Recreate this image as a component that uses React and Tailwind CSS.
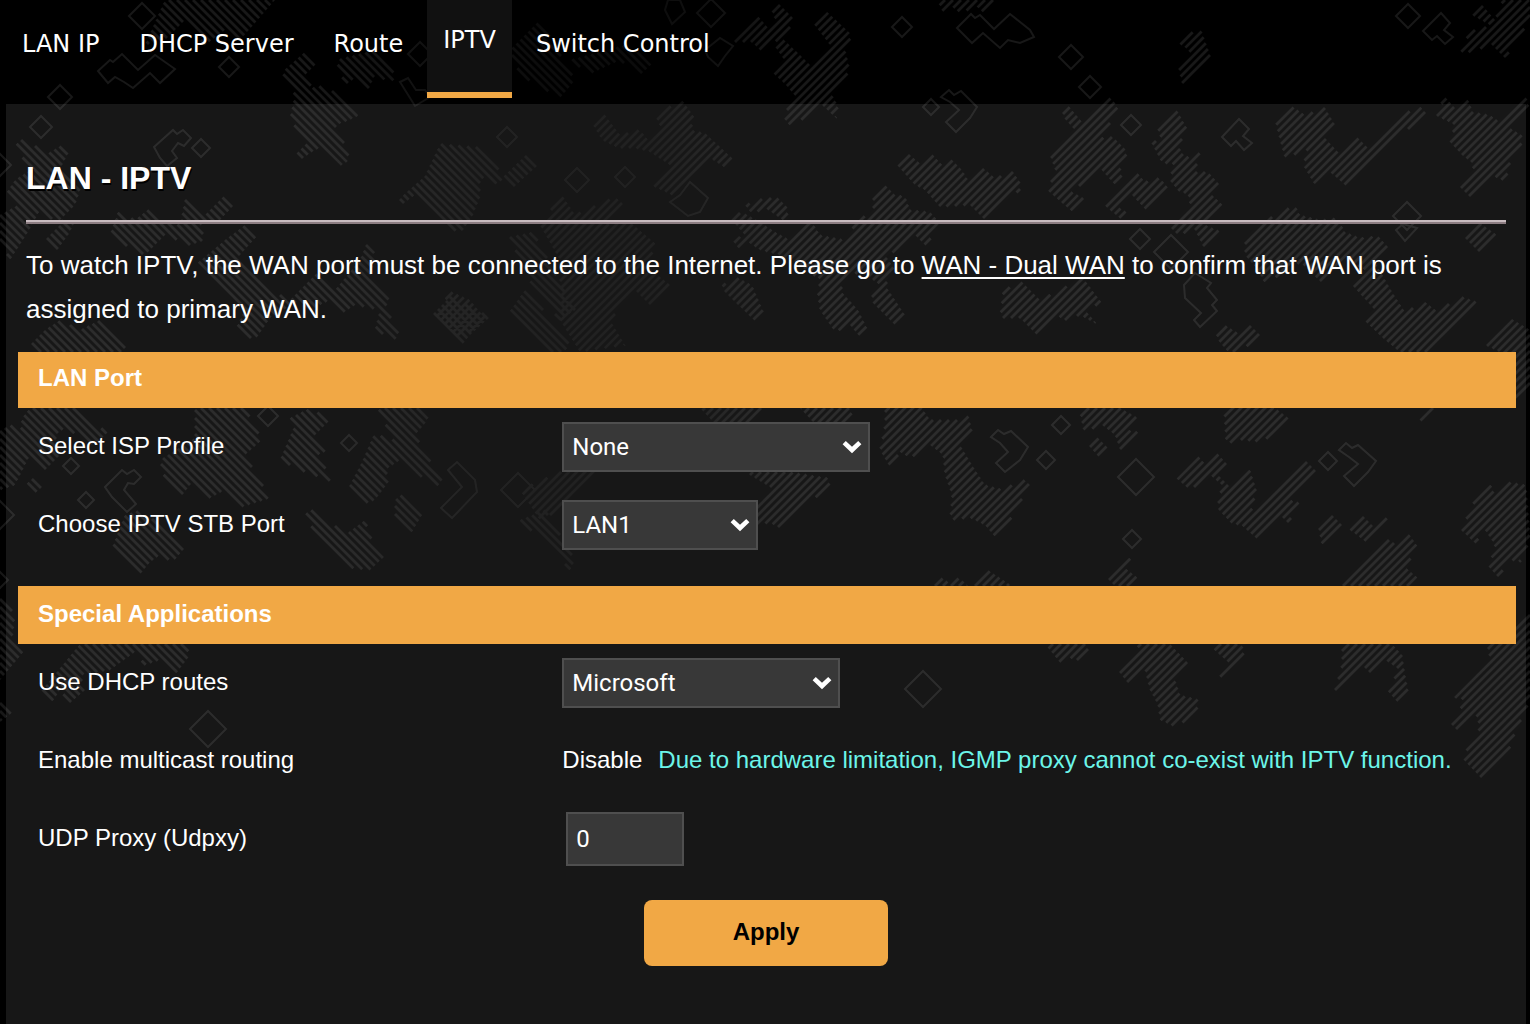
import React, { useState } from 'react';

const tabs = ['LAN IP', 'DHCP Server', 'Route', 'IPTV', 'Switch Control'];

// Hatched patches, stripes rising to the right
const risingPatches = [
  '733,42 758,16 768,28 776,22 771,8 777,2 795,20 785,34 762,52 752,42',
  '813,23 825,10 852,35 845,50 850,70 832,95 838,106 836,118 822,105 791,127 782,116 797,98 786,85 772,72 783,58 774,45 782,38 800,55 813,68 830,45',
  '937,0 998,0 985,14 975,5 961,14 950,5 943,12',
  '655,115 682,100 695,118 690,130 705,133 732,158 724,167 710,158 676,197 653,186 670,165 650,152 635,148 618,148 602,140 593,125 605,115 620,135 640,130 650,142 662,130',
  '897,165 910,155 922,165 933,155 945,168 950,158 962,170 968,180 983,168 995,178 1013,172 1020,182 1020,190 1006,200 985,220 970,205 940,207 925,190 915,185',
  '873,195 884,184 895,195 905,196 910,210 930,212 942,225 925,245 915,235 900,250 885,255 895,270 885,285 905,315 897,327 870,300 880,285 862,272 850,275 840,290 858,310 868,330 860,337 850,325 835,332 820,310 817,290 822,280 812,275 795,262 780,255 760,250 745,240 740,250 732,240 745,235 730,218 742,212 760,222 775,232 790,240 800,225 812,222 820,235 845,240 860,217 873,215',
  '745,205 765,198 778,198 790,210 783,220 765,208 752,214',
  '722,285 738,278 752,285 757,297 765,315 757,323 735,302 725,292',
  '540,225 562,195 575,215 615,197 622,203 600,225 630,222 657,245 645,265 670,285 650,305 635,290 610,320 625,345 580,352 560,320 560,260',
  '433,314 452,292 470,300 485,318 460,340',
  '520,490 560,472 600,470 560,510 540,520',
  '1062,110 1067,104 1082,122 1108,96 1118,106 1112,120 1100,138 1113,137 1128,152 1120,165 1122,178 1116,186 1100,168 1072,192 1087,200 1075,214 1047,190 1056,172 1050,155 1075,130 1064,118',
  '1104,205 1135,170 1145,182 1160,178 1170,190 1148,212 1132,195 1118,207 1128,213 1122,220',
  '1157,127 1175,107 1188,130 1178,145 1185,158 1200,152 1195,172 1208,172 1220,185 1212,195 1225,207 1205,225 1222,232 1205,250 1195,230 1178,235 1168,225 1190,205 1188,193 1180,193 1168,178 1178,165 1162,163 1150,140 1162,142',
  '1275,120 1290,105 1305,115 1325,108 1335,125 1325,138 1338,152 1358,138 1368,148 1418,104 1426,113 1345,185 1330,172 1315,185 1303,165 1308,150 1285,158 1280,140',
  '1435,115 1445,97 1455,108 1468,100 1473,112 1490,115 1500,122 1526,97 1530,110 1510,128 1526,138 1508,160 1513,167 1502,180 1490,175 1470,197 1460,187 1475,165 1462,155 1450,142 1455,125',
  '1245,238 1270,218 1295,205 1300,215 1320,220 1338,218 1345,232 1360,238 1378,236 1388,247 1375,262 1392,292 1405,312 1425,302 1438,312 1460,296 1480,303 1450,330 1430,352 1400,352 1385,340 1366,322 1375,310 1352,285 1365,270 1345,260 1322,283 1300,262 1265,284 1258,270 1245,255',
  '1465,238 1480,223 1497,235 1480,253',
  '1178,43 1200,27 1210,55 1183,87 1178,65 1195,45 1186,48',
  '1472,15 1483,6 1495,20 1503,0 1530,0 1530,20 1505,58 1492,45 1460,55 1470,30 1480,30 1490,25',
  '1003,292 1020,280 1040,300 1083,278 1102,303 1085,310 1098,325 1080,315 1065,320 1055,315 1037,335 1020,318 1000,318',
  '1215,330 1225,325 1238,333 1248,323 1260,335 1240,352 1228,352 1218,340',
  '1485,345 1510,318 1530,330 1530,385 1516,405 1500,352',
  '880,450 885,425 885,408 920,405 930,420 960,420 968,415 972,430 960,445 972,465 985,485 1005,490 1022,478 1030,485 1010,520 995,537 985,525 970,518 950,520 952,495 945,475 943,455 930,445 910,458 900,452 890,467',
  '700,408 765,408 752,424 715,424',
  '800,408 855,408 845,424 815,424',
  '755,505 775,490 745,472 790,472 828,478 830,485 780,528 768,522 755,530',
  '1080,413 1085,408 1120,408 1138,418 1127,430 1138,432 1120,449 1115,435 1102,425 1084,432',
  '1090,447 1098,438 1108,448 1098,456',
  '1224,410 1240,400 1275,408 1291,420 1262,442 1240,440 1226,444',
  '1418,418 1430,408 1440,408 1424,424',
  '1176,478 1198,456 1206,465 1217,453 1226,463 1218,475 1230,487 1250,470 1257,492 1250,510 1265,502 1306,461 1315,470 1290,500 1300,503 1288,523 1280,515 1256,538 1240,524 1233,525 1217,508 1222,485 1210,475 1190,490',
  '1319,530 1332,515 1342,525 1322,545',
  '1350,530 1364,517 1372,525 1384,514 1388,520 1366,542',
  '1335,586 1384,537 1394,543 1407,531 1418,547 1405,567 1418,578 1412,586',
  '1461,530 1475,500 1490,483 1495,495 1508,482 1526,485 1530,540 1520,562 1510,560 1498,577 1489,567 1495,545 1485,530 1475,543',
  '1106,577 1128,555 1132,562 1125,568 1138,578 1132,586 1115,586',
  '935,586 942,578 948,582 960,578 968,586',
  '970,586 988,570 1012,586',
  '1045,644 1088,644 1088,655 1078,663 1075,655 1062,665',
  '1120,673 1140,644 1170,644 1188,663 1175,680 1180,695 1200,700 1195,715 1175,727 1160,720 1158,705 1150,690 1145,670 1128,683',
  '1212,648 1215,644 1242,644 1244,655 1218,681 1228,662',
  '1335,690 1342,665 1342,644 1392,644 1402,655 1405,675 1408,690 1400,705 1387,690 1400,670 1385,660 1372,675 1362,665 1340,690',
  '1451,697 1490,660 1487,644 1500,640 1530,615 1530,700 1512,740 1508,755 1483,780 1462,758 1480,728 1475,712 1457,730 1452,725 1465,700',
];

// Hatched patches, stripes falling to the right
const fallingPatches = [
  '145,45 165,0 275,0 240,40 225,30 205,45 185,20 165,40',
  '510,50 540,20 575,80 560,98 520,75',
  '570,60 625,45 654,62 640,75 620,60 590,74',
  '282,72 305,52 318,62 305,75 312,88 325,85 360,115 345,122 335,125 345,145 350,160 340,166 300,135 290,118 295,95',
  '336,60 375,50 398,78 390,82 375,75 368,90 355,78 345,85',
  '295,155 308,142 315,150 300,160',
  '15,145 25,137 45,155 62,145 70,150 62,165 80,190 75,205 60,220 75,222 68,235 55,253 45,240 60,225 40,210 28,232 10,260 0,240 0,215 18,205 5,195 15,180 30,170',
  '110,235 118,212 135,220 150,208 165,222 180,225 185,200 205,215 225,195 234,205 220,220 200,225 205,240 190,245 165,235 145,255 125,245',
  '195,265 225,240 245,225 258,235 240,255 250,270 270,290 290,300 310,280 320,270 335,290 360,260 368,240 375,255 370,280 390,295 385,310 400,330 395,340 375,330 380,310 355,305 340,315 330,300 310,310 300,300 270,318 255,340 235,330 245,310 230,295 215,285',
  '440,144 477,147 497,164 503,186 480,177 480,197 472,217 460,234 430,211 415,195 400,206 400,198 425,176',
  '503,177 527,154 537,166 515,186',
  '510,237 533,232 575,310 560,320 535,290 520,262',
  '510,311 525,290 570,340 565,352 550,352',
  '433,314 450,297 490,317 470,335 462,345',
  '30,345 45,330 60,320 80,330 100,320 125,345 125,352 35,352',
  '22,418 30,408 75,408 90,422 108,432 95,445 65,428 55,435 60,455 45,470 30,455 15,485 0,490 0,430 12,425 20,435',
  '25,485 33,478 42,487 33,495',
  '160,460 195,438 195,408 245,408 262,440 245,455 270,498 242,507 225,490 210,498 190,485 180,498 165,480',
  '112,548 125,515 140,510 160,525 183,550 173,562 160,555 150,562 138,577',
  '280,460 295,425 290,418 310,408 330,420 315,435 328,450 318,455 333,482 300,470',
  '350,485 362,462 375,432 395,445 378,408 425,408 428,420 415,435 443,483 435,487 400,460 385,470 390,480 375,500 362,505',
  '395,500 405,492 422,515 412,532 395,522',
  '303,515 315,508 345,535 365,520 372,540 384,557 370,570 350,568 325,545',
  '520,520 545,510 575,560 570,570 555,552',
  '0,595 15,615 12,640 25,650 0,680',
  '42,690 75,650 80,644 185,644 190,655 175,675 160,660 145,665 135,652 110,670 80,675 85,690 70,703 60,690 52,702',
  '0,700 13,712 0,722',
];

const outlines = [
  '98,71 110,60 113,62 122,54 138,70 155,55 175,69 160,83 150,73 133,88 124,82 115,77 108,83',
  '154,147 173,130 177,134 183,130 191,138 184,146 178,143 172,151 177,158 167,166 160,158',
  '941,97 949,90 954,95 961,91 977,107 970,118 956,132 946,122 959,110 950,102',
  '957,28 971,14 975,18 980,15 994,29 1010,14 1030,30 1034,37 1020,43 1008,40 1000,48 983,33 972,43',
  '1423,31 1441,13 1450,23 1444,30 1453,37 1445,44 1437,36 1432,40',
  '1222,137 1239,119 1249,129 1243,136 1252,143 1244,150 1236,141 1231,146',
  '991,437 998,430 1004,434 1011,431 1028,447 1020,460 1005,472 996,463 1008,452 1000,443',
  '1339,450 1346,443 1352,448 1358,445 1376,461 1368,472 1354,486 1344,476 1358,464 1349,457',
  '105,487 122,470 127,474 134,470 141,477 134,484 128,483 124,490 136,504 127,512 112,497',
  '1184,285 1195,273 1211,283 1207,288 1217,300 1212,305 1217,311 1200,327 1194,320 1201,313 1185,298',
  '1396,230 1403,224 1417,228 1405,241',
  '448,470 457,462 475,480 477,492 452,518 441,508 462,487',
  '665,10 672,24 685,12 680,0 668,0',
  '705,50 720,38 733,46 725,56 718,66 708,57',
  '400,82 408,78 416,90 425,90 430,97 415,106',
  '670,202 680,195 690,182 708,198 700,212 688,216',
];

// [centre x, centre y, half width]
const diamonds = [
  [142, 16, 13], [60, 97, 12], [41, 127, 11], [229, 67, 10], [201, 148, 9], [420, 54, 12],
  [0, 165, 11], [71, 466, 8], [86, 500, 8], [268, 416, 10], [349, 443, 8], [711, 13, 14],
  [577, 180, 12], [625, 177, 10], [902, 27, 10], [1071, 57, 12], [1090, 87, 11], [507, 137, 10],
  [1131, 125, 10], [1408, 16, 12], [931, 107, 8], [1140, 239, 10], [1171, 252, 17], [1061, 425, 9],
  [1046, 460, 9], [1136, 477, 18], [1328, 461, 9], [1132, 539, 9], [923, 689, 18], [208, 729, 18],
  [0, 515, 14], [0, 580, 8], [518, 490, 17], [1407, 216, 14],
];

const STRIPE_STEP = 8;

// Cuts a patch into 45 degree stripes. sign is 1 for rising stripes, -1 for falling ones.
const hatch = (patch, sign) => {
  const points = patch.split(' ').map((pair) => pair.split(',').map(Number));
  const offsets = points.map(([x, y]) => x + sign * y);
  const first = Math.ceil(Math.min(...offsets) / STRIPE_STEP) * STRIPE_STEP;
  let d = '';
  for (let u = first + 1; u < Math.max(...offsets); u += STRIPE_STEP) {
    const hits = [];
    points.forEach(([x, y], i) => {
      const j = (i + 1) % points.length;
      if (offsets[i] < u === offsets[j] < u) return;
      const t = (u - offsets[i]) / (offsets[j] - offsets[i]);
      hits.push(x + t * (points[j][0] - x));
    });
    hits.sort((a, b) => a - b);
    for (let i = 0; i + 1 < hits.length; i += 2) {
      d += `M${hits[i]} ${sign * (u - hits[i])}L${hits[i + 1]} ${sign * (u - hits[i + 1])}`;
    }
  }
  return d;
};

const stripes = [
  ...risingPatches.map((patch) => hatch(patch, 1)),
  ...fallingPatches.map((patch) => hatch(patch, -1)),
];

const Backdrop = () => (
  <svg
    className="absolute inset-0 h-full w-full"
    viewBox="0 0 1530 1024"
    preserveAspectRatio="xMidYMin slice"
    fill="none"
    stroke="#181818"
    aria-hidden="true"
  >
    <defs>
      <linearGradient id="fade">
        <stop offset="0.2" stopColor="#fff" />
        <stop offset="0.33" stopColor="#888" />
        <stop offset="0.42" stopColor="#777" />
        <stop offset="0.52" stopColor="#fff" />
      </linearGradient>
      <mask id="fade-mask" maskUnits="userSpaceOnUse" x="0" y="0" width="1530" height="1024">
        <rect width="1530" height="1024" fill="url(#fade)" stroke="none" />
      </mask>
    </defs>
    <g mask="url(#fade-mask)">
      <path d={stripes.join('')} strokeWidth="2.8" />
      <g strokeWidth="2">
        {outlines.map((points) => (
          <polygon key={points} points={points} />
        ))}
        {diamonds.map(([x, y, r]) => (
          <path key={`${x}-${y}`} d={`M${x - r} ${y}L${x} ${y - r}L${x + r} ${y}L${x} ${y + r}Z`} />
        ))}
      </g>
    </g>
  </svg>
);

const SectionBar = ({ children }) => (
  <h2 className="bg-[#f1a845] px-5 pt-2 pb-3 text-2xl leading-9 font-bold text-white">{children}</h2>
);

const Row = ({ label, htmlFor, children }) => (
  <div className="grid min-h-[78px] grid-cols-[35%_1fr] items-center">
    {htmlFor ? (
      <label htmlFor={htmlFor} className="pb-0.5 pl-5">{label}</label>
    ) : (
      <span className="pb-0.5 pl-5">{label}</span>
    )}
    <div className="pl-5">{children}</div>
  </div>
);

const Select = ({ id, options, className }) => (
  <div className={`relative ${className}`}>
    <select
      id={id}
      defaultValue={options[0]}
      className="block h-[50px] w-full appearance-none border-2 border-[#4f4f4f] bg-[#383838] pr-9 pl-2 font-['Roboto',sans-serif] text-2xl text-white"
    >
      {options.map((option) => (
        <option key={option}>{option}</option>
      ))}
    </select>
    <svg
      className="pointer-events-none absolute top-0 right-2 h-full w-5"
      viewBox="0 0 20 14"
      fill="none"
      stroke="#fff"
      strokeWidth="4.6"
      aria-hidden="true"
    >
      <path d="M2.2 2.6L10 10L17.8 2.6" />
    </svg>
  </div>
);

const App = () => {
  const [activeTab, setActiveTab] = useState('IPTV');
  const [udpxy, setUdpxy] = useState('0');

  return (
    <div className="relative flex min-h-screen flex-col overflow-hidden bg-black font-['Liberation_Sans',Arial,sans-serif] text-white">
      <Backdrop />

      {/* Tabs */}
      <nav className="relative flex min-h-[104px] items-start gap-2 pl-1.5 font-['DejaVu_Sans',Verdana,sans-serif] text-2xl whitespace-nowrap">
        {tabs.map((tab) => (
          <button
            key={tab}
            type="button"
            onClick={() => setActiveTab(tab)}
            className={
              tab === activeTab
                ? 'h-[98px] border-b-6 border-[#f1a845] bg-[#111] px-4 pb-3'
                : 'h-22 px-4'
            }
          >
            {tab}
          </button>
        ))}
      </nav>

      {/* Panel */}
      <main className="relative mr-1 ml-1.5 flex-1 bg-white/9 pt-[54px] pr-2.5 pb-14 pl-3">
        <div className="pr-2.5 pl-2">
          <h1 className="text-[32px] leading-10 font-bold [text-shadow:1px_2px_0_#000]">LAN - IPTV</h1>
          <hr className="mt-[22px] h-1 border-t-2 border-b-2 border-t-[#c9bcc0] border-b-[#8c7d82]" />
          <p className="mt-[19px] text-[26px] leading-11">
            To watch IPTV, the WAN port must be connected to the Internet. Please go to{' '}
            <a href="#dual-wan" className="underline decoration-2 underline-offset-3">WAN - Dual WAN</a>{' '}
            to confirm that WAN port is assigned to primary WAN.
          </p>
        </div>

        <form className="mt-[21px] text-2xl" onSubmit={(e) => e.preventDefault()}>
          <SectionBar>LAN Port</SectionBar>
          <Row label="Select ISP Profile" htmlFor="isp-profile">
            <Select id="isp-profile" options={['None']} className="w-[308px]" />
          </Row>
          <Row label="Choose IPTV STB Port" htmlFor="stb-port">
            <Select id="stb-port" options={['LAN1']} className="w-[196px]" />
          </Row>

          <div className="mt-[22px] bg-[#f1a845] pt-0.5">
            <SectionBar>Special Applications</SectionBar>
          </div>
          <Row label="Use DHCP routes" htmlFor="dhcp-routes">
            <Select id="dhcp-routes" options={['Microsoft']} className="w-[278px]" />
          </Row>
          <Row label="Enable multicast routing">
            <div className="flex gap-4 pb-0.5">
              <span>Disable</span>
              <span className="text-[#6cf5e9]">
                Due to hardware limitation, IGMP proxy cannot co-exist with IPTV function.
              </span>
            </div>
          </Row>
          <Row label="UDP Proxy (Udpxy)" htmlFor="udpxy">
            <input
              id="udpxy"
              type="text"
              value={udpxy}
              onChange={(e) => setUdpxy(e.target.value)}
              className="ml-1 block h-[54px] w-[118px] border-2 border-[#4f4f4f] bg-[#383838] px-2 font-['Roboto',sans-serif] text-2xl text-white"
            />
          </Row>

          <div className="mt-[22px] flex justify-center pr-0.5">
            <button type="submit" className="h-[66px] w-[244px] rounded-lg bg-[#f1a845] pb-0.5 font-bold text-black">
              Apply
            </button>
          </div>
        </form>
      </main>
    </div>
  );
};

export default App;
